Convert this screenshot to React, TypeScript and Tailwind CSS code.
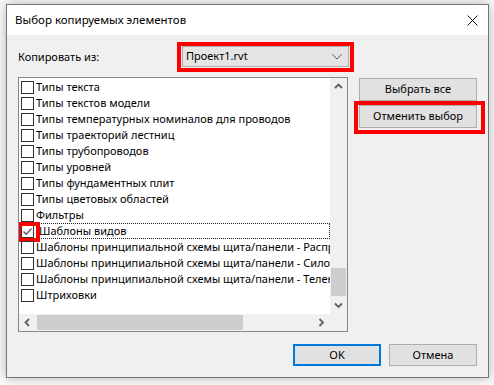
import React from "react";

const ITEMS = [
  { label: "Типы текста" },
  { label: "Типы текстов модели" },
  { label: "Типы температурных номиналов для проводов" },
  { label: "Типы траекторий лестниц" },
  { label: "Типы трубопроводов" },
  { label: "Типы уровней" },
  { label: "Типы фундаментных плит" },
  { label: "Типы цветовых областей" },
  { label: "Фильтры" },
  { label: "Шаблоны видов", checked: true, focused: true },
  { label: "Шаблоны принципиальной схемы щита/панели - Распределение" },
  { label: "Шаблоны принципиальной схемы щита/панели - Силовой щит" },
  { label: "Шаблоны принципиальной схемы щита/панели - Телекоммуникации" },
  { label: "Штриховки" },
];

const font = { fontFamily: '"Noto Sans", "Segoe UI", sans-serif' };

function Chevron({ dir }: { dir: "up" | "down" | "left" | "right" }) {
  const paths: Record<string, string> = {
    up: "M1 6 L4.5 2.5 L8 6",
    down: "M1 2.5 L4.5 6 L8 2.5",
    left: "M6 1 L2.5 4.5 L6 8",
    right: "M2.5 1 L6 4.5 L2.5 8",
  };
  return (
    <svg width="9" height="9" viewBox="0 0 9 9">
      <path d={paths[dir]} fill="none" stroke="#606060" strokeWidth="1.8" />
    </svg>
  );
}

function Checkbox({ checked }: { checked?: boolean }) {
  return (
    <div className="w-[13px] h-[13px] shrink-0 border border-[#333333] bg-white flex items-center justify-center">
      {checked && (
        <svg width="11" height="11" viewBox="0 0 11 11">
          <path d="M1.5 5.5 L4.2 8.3 L9.5 2.5" fill="none" stroke="#5a5a5a" strokeWidth="1.3" />
        </svg>
      )}
    </div>
  );
}

function Button({ children }: { children: React.ReactNode }) {
  return (
    <div className="h-[23px] w-[118px] flex items-center justify-center bg-[#e1e1e1] border border-[#adadad] text-[11px] text-black">
      {children}
    </div>
  );
}

export default function App() {
  return (
    <div className="w-[494px] h-[385px] bg-[#f9f9f9] pt-[4px] pl-[6px] overflow-hidden" style={font}>
      <div className="w-[483px] h-[374px] border border-[#777777] bg-[#f0f0f0] shadow-[0_0_10px_rgba(0,0,0,0.28)] flex flex-col">
        {/* Title bar */}
        <div className="h-[30px] bg-white flex items-center justify-between pl-[8px] pr-[10px] shrink-0">
          <span className="text-[11.5px] text-black">Выбор копируемых элементов</span>
          <svg width="11" height="11" viewBox="0 0 11 11">
            <path d="M0.5 0.5 L10.5 10.5 M10.5 0.5 L0.5 10.5" stroke="#111" strokeWidth="1" />
          </svg>
        </div>

        <div className="flex-1 pl-[11px] pr-[11px]">
          {/* Copy from */}
          <div className="flex items-center mt-[7px] h-[30px]">
            <span className="w-[159px] text-[11px] text-black">Копировать из:</span>
            <div className="w-[177px] h-[30px] border-[4px] border-[#ff0000] px-[1px] pt-0 pb-[1px]">
              <div className="h-full border border-[#adadad] bg-[#e5e5e5] flex items-center justify-between pl-[3px] pr-[6px]">
                <span className="text-[11px] text-black">Проект1.rvt</span>
                <svg width="10" height="6" viewBox="0 0 10 6">
                  <path d="M0.5 0.5 L5 5 L9.5 0.5" fill="none" stroke="#555" strokeWidth="1" />
                </svg>
              </div>
            </div>
          </div>

          {/* List and side buttons */}
          <div className="flex mt-[5px]">
            <div className="w-[330px] h-[255px] border border-[#828790] bg-white flex flex-col">
              <div className="flex flex-1 min-h-0">
                <div className="flex-1 min-w-0 overflow-hidden pt-[1px] pl-[2px] relative">
                  {ITEMS.map((item) => (
                    <div key={item.label} className="h-[16px] flex items-center relative">
                      <Checkbox checked={item.checked} />
                      <div
                        className={`flex-1 h-[16px] flex items-center whitespace-nowrap text-[11px] text-black ${
                          item.focused ? "ml-[3px] pl-[1px] border border-dotted border-[#222]" : "ml-[2px]"
                        }`}
                      >
                        {item.label}
                      </div>
                      {item.focused && (
                        <div className="absolute left-[-4px] top-[-1px] w-[23px] h-[20px] border-[4px] border-[#ff0000]" />
                      )}
                    </div>
                  ))}
                </div>
                {/* Vertical scrollbar */}
                <div className="w-[17px] bg-[#f0f0f0] flex flex-col items-center">
                  <div className="h-[17px] flex items-center justify-center">
                    <Chevron dir="up" />
                  </div>
                  <div className="flex-1 w-full flex flex-col justify-end">
                    <div className="h-[28px] mx-[1px] bg-[#cdcdcd] mb-[1px]" />
                  </div>
                  <div className="h-[17px] flex items-center justify-center">
                    <Chevron dir="down" />
                  </div>
                </div>
              </div>
              {/* Horizontal scrollbar */}
              <div className="h-[17px] flex bg-[#f0f0f0]">
                <div className="flex-1 flex items-center">
                  <div className="w-[17px] flex items-center justify-center">
                    <Chevron dir="left" />
                  </div>
                  <div className="w-[206px] h-[15px] ml-[1px] bg-[#cdcdcd]" />
                  <div className="flex-1" />
                  <div className="w-[17px] flex items-center justify-center">
                    <Chevron dir="right" />
                  </div>
                </div>
                <div className="w-[17px] bg-[#f0f0f0]" />
              </div>
            </div>

            <div className="pl-[6px] flex flex-col">
              <div className="ml-[5px] mt-[1px]">
                <Button>Выбрать все</Button>
              </div>
              <div className="w-[131px] h-[33px] border-[4px] border-[#ff0000] pl-[1px] pt-0">
                <Button>Отменить выбор</Button>
              </div>
            </div>
          </div>

          {/* Bottom buttons */}
          <div className="flex justify-end gap-[8px] mt-[12px]">
            <div className="h-[22px] w-[88px] flex items-center justify-center bg-[#e1e1e1] border-2 border-[#0078d7] text-[11px] text-black">
              OK
            </div>
            <div className="h-[22px] w-[88px] flex items-center justify-center bg-[#e1e1e1] border border-[#adadad] text-[11px] text-black">
              Отмена
            </div>
          </div>
        </div>
      </div>
    </div>
  );
}
